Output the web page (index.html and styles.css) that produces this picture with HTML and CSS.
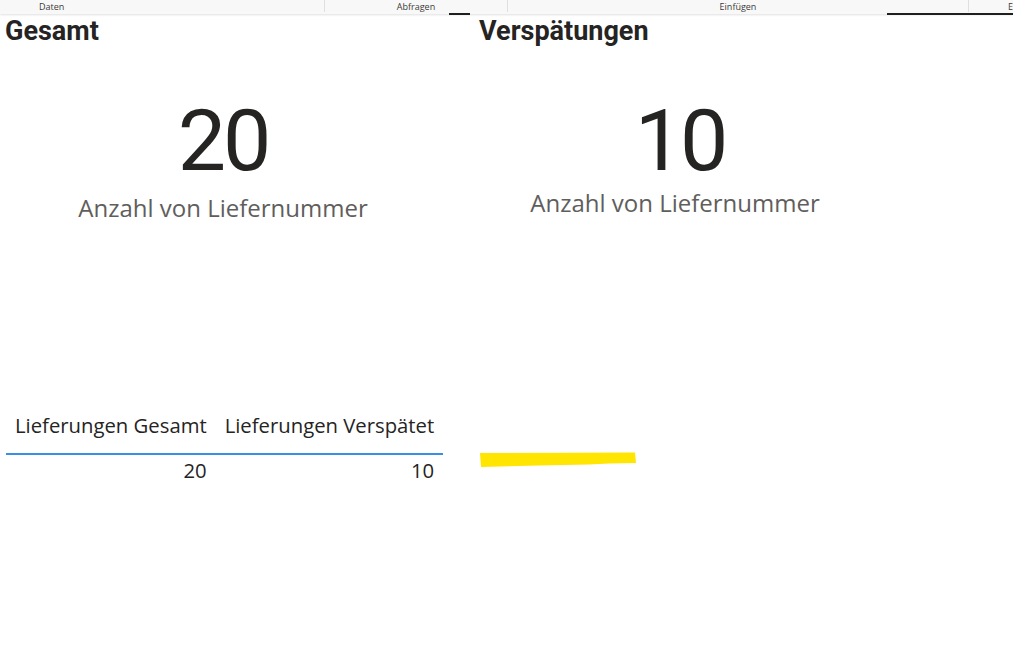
FILE: index.html
```html
<!DOCTYPE html>
<html lang="de">
<head>
    <meta charset="UTF-8">
    <title>Lieferungen</title>
    <link rel="stylesheet" href="styles.css">
</head>
<body>
    <!-- Ribbon-Gruppen -->
    <div class="ribbon">
        <div class="group group-daten"><span>Daten</span></div>
        <div class="group group-abfragen"><span>Abfragen</span></div>
        <div class="group group-einfuegen"><span>Einfügen</span></div>
        <div class="group group-rest"><span>E</span></div>
        <div class="tab-line tab-line-a"></div>
        <div class="tab-line tab-line-b"></div>
    </div>
    <div class="canvas">
        <!-- Gesamt -->
        <div class="column column-left">
            <h2 class="title">Gesamt</h2>
            <div class="kpi">
                <div class="kpi-value">20</div>
                <div class="kpi-label">Anzahl von Liefernummer</div>
            </div>
            <table class="matrix">
                <thead>
                    <tr>
                        <th>Lieferungen Gesamt</th>
                        <th>Lieferungen Verspätet</th>
                    </tr>
                </thead>
                <tbody>
                    <tr>
                        <td>20</td>
                        <td>10</td>
                    </tr>
                </tbody>
            </table>
        </div>
        <!-- Verspätungen -->
        <div class="column column-right">
            <h2 class="title">Verspätungen</h2>
            <div class="kpi kpi-right">
                <div class="kpi-value">10</div>
                <div class="kpi-label">Anzahl von Liefernummer</div>
            </div>
            <svg class="marker" width="160" height="16" viewBox="0 0 160 16">
                <path d="M1 1 L156 0.5 L157 11 L130 11.5 L110 12.5 L60 13.5 L2 15 Z" fill="#ffe500"/>
            </svg>
        </div>
    </div>
</body>
</html>
```

FILE: styles.css
```css
:root {
    --text-dark: #252423;
    --text-gray: #605e5c;
    --ribbon-bg: #f8f8f8;
    --line-blue: #3a8ee6;
}
body {
    margin: 0;
    background: #ffffff;
    font-family: 'Open Sans', 'Liberation Sans', sans-serif;
    color: var(--text-dark);
    overflow: hidden;
}
.ribbon {
    position: relative;
    display: flex;
    height: 14px;
    background: var(--ribbon-bg);
    box-shadow: 0 1px 2px rgba(0, 0, 0, 0.12);
    font-size: 9px;
    line-height: 14px;
    color: #3b3a39;
}
.group {
    border-right: 1px solid #e1dfdd;
    height: 12px;
    text-align: center;
    overflow: hidden;
}
.group-daten {
    width: 325px;
    text-align: left;
    padding-left: 39px;
    box-sizing: border-box;
}
.group-abfragen {
    width: 182px;
}
.group-einfuegen {
    width: 460px;
}
.group-rest {
    flex: 1;
    border-right: none;
    text-align: right;
}
.tab-line {
    position: absolute;
    top: 13px;
    height: 2px;
    background: #201f1e;
}
.tab-line-a {
    left: 449px;
    width: 21px;
}
.tab-line-b {
    left: 887px;
    right: 0;
}
.canvas {
    display: flex;
}
.column-left {
    width: 474px;
    padding-left: 5px;
    box-sizing: border-box;
}
.column-right {
    width: 420px;
    padding-left: 5px;
}
.title {
    margin: 0;
    padding-top: 2px;
    font-family: Roboto, 'DejaVu Sans Condensed', sans-serif;
    font-weight: 700;
    font-size: 27px;
    line-height: 30px;
    color: var(--text-dark);
    letter-spacing: 0;
}
.kpi {
    width: 436px;
    text-align: center;
    padding-top: 45px;
}
.kpi-right {
    width: 402px;
}
.kpi-value {
    font-family: Roboto, sans-serif;
    font-size: 86px;
    line-height: 100px;
    letter-spacing: -3px;
    color: var(--text-dark);
}
.kpi-label {
    margin-top: 2px;
    font-size: 24px;
    line-height: 30px;
    color: var(--text-gray);
}
.kpi-right .kpi-label {
    margin-top: -3px;
    padding-right: 10px;
}
.matrix {
    margin-top: 182px;
    margin-left: 1px;
    border-collapse: collapse;
    font-size: 20.3px;
}
.matrix th {
    font-weight: 400;
    text-align: left;
    padding: 6px 9px 14px 9px;
    border-bottom: 2px solid var(--line-blue);
}
.matrix td {
    text-align: right;
    padding: 1px 9px;
}
.marker {
    display: block;
    margin-top: 234px;
}
```
